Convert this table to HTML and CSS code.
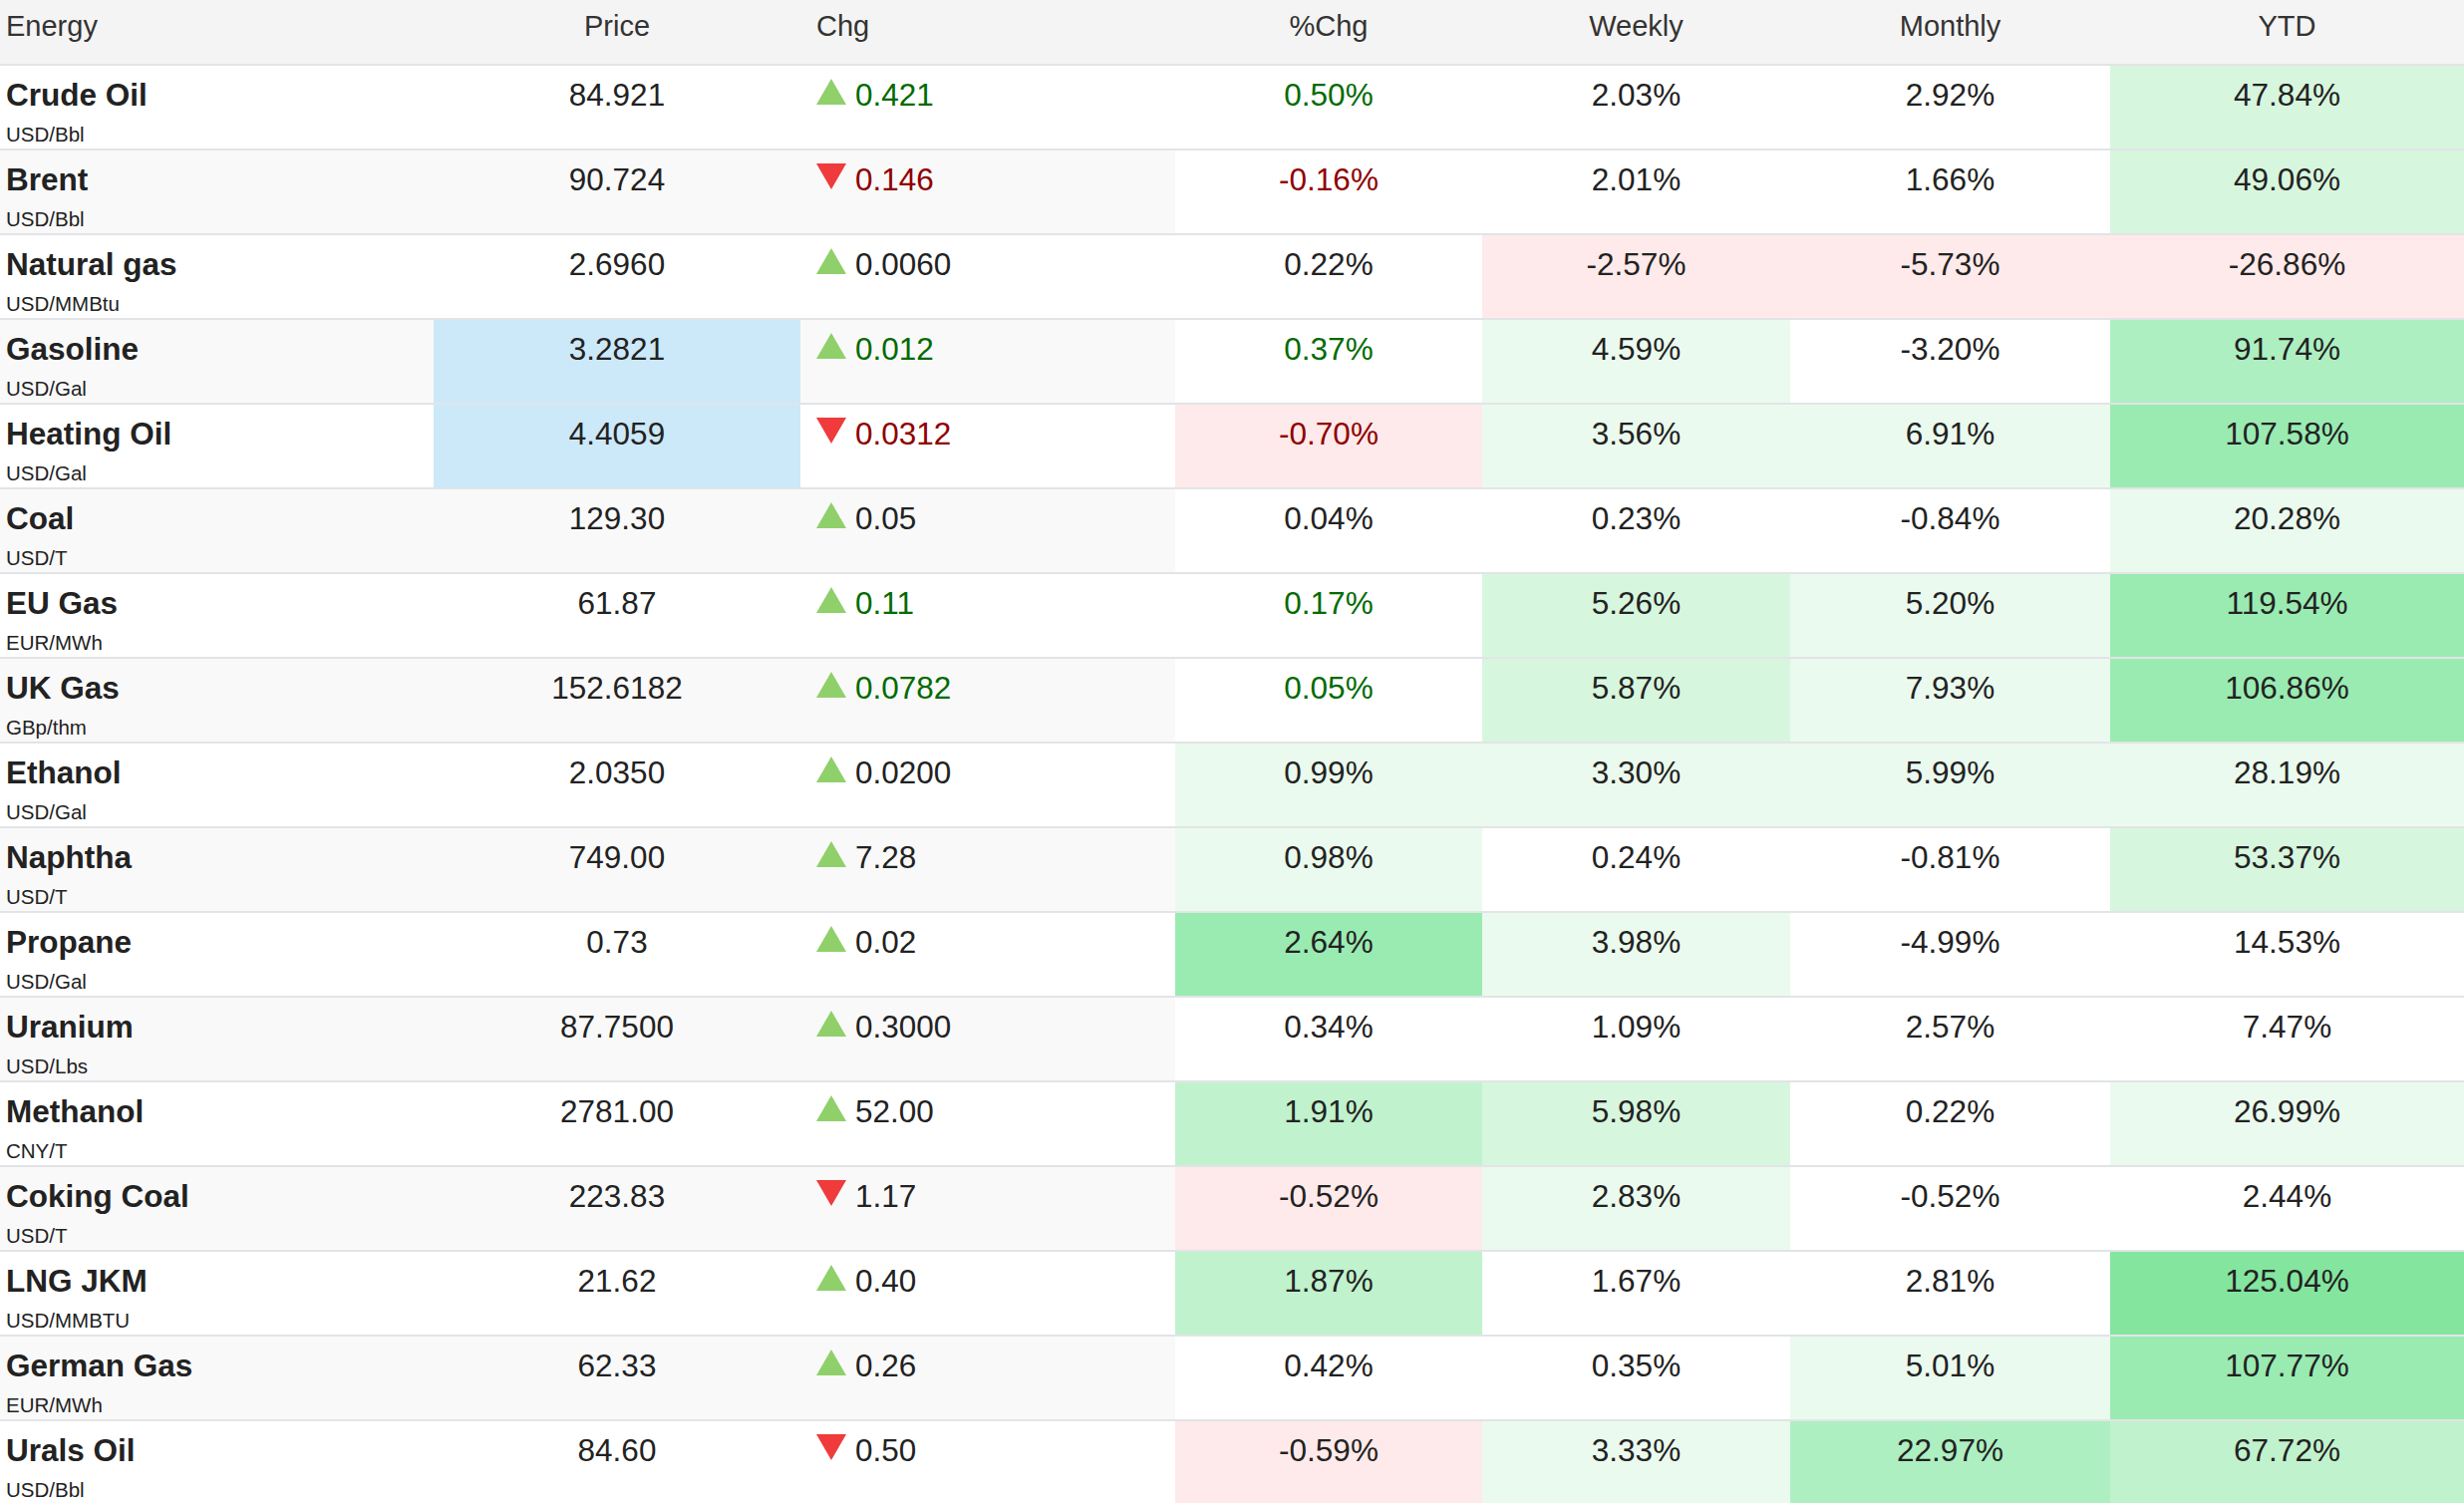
FILE: index.html
```html
<!DOCTYPE html>
<html lang="en">
<head>
<meta charset="utf-8">
<title>Energy</title>
<link rel="stylesheet" href="styles.css">
</head>
<body>
<div class="table">
  <div class="row head">
    <div class="cell name">Energy</div>
    <div class="cell num">Price</div>
    <div class="cell chg">Chg</div>
    <div class="cell num">%Chg</div>
    <div class="cell num">Weekly</div>
    <div class="cell num">Monthly</div>
    <div class="cell num">YTD</div>
  </div>

  <div class="row">
    <div class="cell name"><div class="title">Crude Oil</div><div class="unit">USD/Bbl</div></div>
    <div class="cell num">84.921</div>
    <div class="cell chg up"><span class="tri up"></span><span class="pos">0.421</span></div>
    <div class="cell num heat pos">0.50%</div>
    <div class="cell num heat">2.03%</div>
    <div class="cell num heat">2.92%</div>
    <div class="cell num heat g2">47.84%</div>
  </div>

  <div class="row even">
    <div class="cell name"><div class="title">Brent</div><div class="unit">USD/Bbl</div></div>
    <div class="cell num">90.724</div>
    <div class="cell chg"><span class="tri down"></span><span class="neg">0.146</span></div>
    <div class="cell num heat neg">-0.16%</div>
    <div class="cell num heat">2.01%</div>
    <div class="cell num heat">1.66%</div>
    <div class="cell num heat g2">49.06%</div>
  </div>

  <div class="row">
    <div class="cell name"><div class="title">Natural gas</div><div class="unit">USD/MMBtu</div></div>
    <div class="cell num">2.6960</div>
    <div class="cell chg"><span class="tri up"></span><span>0.0060</span></div>
    <div class="cell num heat">0.22%</div>
    <div class="cell num heat r1">-2.57%</div>
    <div class="cell num heat r1">-5.73%</div>
    <div class="cell num heat r1">-26.86%</div>
  </div>

  <div class="row even">
    <div class="cell name"><div class="title">Gasoline</div><div class="unit">USD/Gal</div></div>
    <div class="cell num flash">3.2821</div>
    <div class="cell chg"><span class="tri up"></span><span class="pos">0.012</span></div>
    <div class="cell num heat pos">0.37%</div>
    <div class="cell num heat g1">4.59%</div>
    <div class="cell num heat">-3.20%</div>
    <div class="cell num heat g4">91.74%</div>
  </div>

  <div class="row">
    <div class="cell name"><div class="title">Heating Oil</div><div class="unit">USD/Gal</div></div>
    <div class="cell num flash">4.4059</div>
    <div class="cell chg"><span class="tri down"></span><span class="neg">0.0312</span></div>
    <div class="cell num heat r1 neg">-0.70%</div>
    <div class="cell num heat g1">3.56%</div>
    <div class="cell num heat g1">6.91%</div>
    <div class="cell num heat g5">107.58%</div>
  </div>

  <div class="row even">
    <div class="cell name"><div class="title">Coal</div><div class="unit">USD/T</div></div>
    <div class="cell num">129.30</div>
    <div class="cell chg"><span class="tri up"></span><span>0.05</span></div>
    <div class="cell num heat">0.04%</div>
    <div class="cell num heat">0.23%</div>
    <div class="cell num heat">-0.84%</div>
    <div class="cell num heat g1">20.28%</div>
  </div>

  <div class="row">
    <div class="cell name"><div class="title">EU Gas</div><div class="unit">EUR/MWh</div></div>
    <div class="cell num">61.87</div>
    <div class="cell chg"><span class="tri up"></span><span class="pos">0.11</span></div>
    <div class="cell num heat pos">0.17%</div>
    <div class="cell num heat g2">5.26%</div>
    <div class="cell num heat g1">5.20%</div>
    <div class="cell num heat g5">119.54%</div>
  </div>

  <div class="row even">
    <div class="cell name"><div class="title">UK Gas</div><div class="unit">GBp/thm</div></div>
    <div class="cell num">152.6182</div>
    <div class="cell chg"><span class="tri up"></span><span class="pos">0.0782</span></div>
    <div class="cell num heat pos">0.05%</div>
    <div class="cell num heat g2">5.87%</div>
    <div class="cell num heat g1">7.93%</div>
    <div class="cell num heat g5">106.86%</div>
  </div>

  <div class="row">
    <div class="cell name"><div class="title">Ethanol</div><div class="unit">USD/Gal</div></div>
    <div class="cell num">2.0350</div>
    <div class="cell chg"><span class="tri up"></span><span>0.0200</span></div>
    <div class="cell num heat g1">0.99%</div>
    <div class="cell num heat g1">3.30%</div>
    <div class="cell num heat g1">5.99%</div>
    <div class="cell num heat g1">28.19%</div>
  </div>

  <div class="row even">
    <div class="cell name"><div class="title">Naphtha</div><div class="unit">USD/T</div></div>
    <div class="cell num">749.00</div>
    <div class="cell chg"><span class="tri up"></span><span>7.28</span></div>
    <div class="cell num heat g1">0.98%</div>
    <div class="cell num heat">0.24%</div>
    <div class="cell num heat">-0.81%</div>
    <div class="cell num heat g2">53.37%</div>
  </div>

  <div class="row">
    <div class="cell name"><div class="title">Propane</div><div class="unit">USD/Gal</div></div>
    <div class="cell num">0.73</div>
    <div class="cell chg"><span class="tri up"></span><span>0.02</span></div>
    <div class="cell num heat g5">2.64%</div>
    <div class="cell num heat g1">3.98%</div>
    <div class="cell num heat">-4.99%</div>
    <div class="cell num heat">14.53%</div>
  </div>

  <div class="row even">
    <div class="cell name"><div class="title">Uranium</div><div class="unit">USD/Lbs</div></div>
    <div class="cell num">87.7500</div>
    <div class="cell chg"><span class="tri up"></span><span>0.3000</span></div>
    <div class="cell num heat">0.34%</div>
    <div class="cell num heat">1.09%</div>
    <div class="cell num heat">2.57%</div>
    <div class="cell num heat">7.47%</div>
  </div>

  <div class="row">
    <div class="cell name"><div class="title">Methanol</div><div class="unit">CNY/T</div></div>
    <div class="cell num">2781.00</div>
    <div class="cell chg"><span class="tri up"></span><span>52.00</span></div>
    <div class="cell num heat g3">1.91%</div>
    <div class="cell num heat g2">5.98%</div>
    <div class="cell num heat">0.22%</div>
    <div class="cell num heat g1">26.99%</div>
  </div>

  <div class="row even">
    <div class="cell name"><div class="title">Coking Coal</div><div class="unit">USD/T</div></div>
    <div class="cell num">223.83</div>
    <div class="cell chg"><span class="tri down"></span><span>1.17</span></div>
    <div class="cell num heat r1">-0.52%</div>
    <div class="cell num heat g1">2.83%</div>
    <div class="cell num heat">-0.52%</div>
    <div class="cell num heat">2.44%</div>
  </div>

  <div class="row">
    <div class="cell name"><div class="title">LNG JKM</div><div class="unit">USD/MMBTU</div></div>
    <div class="cell num">21.62</div>
    <div class="cell chg"><span class="tri up"></span><span>0.40</span></div>
    <div class="cell num heat g3">1.87%</div>
    <div class="cell num heat">1.67%</div>
    <div class="cell num heat">2.81%</div>
    <div class="cell num heat g6">125.04%</div>
  </div>

  <div class="row even">
    <div class="cell name"><div class="title">German Gas</div><div class="unit">EUR/MWh</div></div>
    <div class="cell num">62.33</div>
    <div class="cell chg"><span class="tri up"></span><span>0.26</span></div>
    <div class="cell num heat">0.42%</div>
    <div class="cell num heat">0.35%</div>
    <div class="cell num heat g1">5.01%</div>
    <div class="cell num heat g5">107.77%</div>
  </div>

  <div class="row">
    <div class="cell name"><div class="title">Urals Oil</div><div class="unit">USD/Bbl</div></div>
    <div class="cell num">84.60</div>
    <div class="cell chg"><span class="tri down"></span><span>0.50</span></div>
    <div class="cell num heat r1">-0.59%</div>
    <div class="cell num heat g1">3.33%</div>
    <div class="cell num heat g4">22.97%</div>
    <div class="cell num heat g3">67.72%</div>
  </div>
</div>
</body>
</html>
```

FILE: styles.css
```css
html, body {
  margin: 0;
  padding: 0;
  background: #ffffff;
}

body {
  font-family: "Liberation Sans", Arial, Helvetica, sans-serif;
  color: #222222;
}

.table {
  width: 2472px;
}

.row {
  display: grid;
  grid-template-columns: 435px 368px 376px 308px 309px 321px 355px;
  height: 85px;
  box-sizing: border-box;
  border-bottom: 2px solid #e2e4e7;
}

.row.head {
  height: 66px;
  background: #f4f4f4;
}

.cell {
  box-sizing: border-box;
  padding-top: 11px;
  font-size: 31.5px;
  line-height: 36px;
  white-space: nowrap;
}

.head .cell {
  padding-top: 10px;
  font-size: 29px;
  line-height: 33px;
  color: #333333;
}

.cell.name {
  padding-left: 6px;
}

.cell.num {
  text-align: center;
}

.cell.chg {
  padding-left: 16px;
}

.row.even .cell {
  background: #f9f9f9;
}

.row .cell.heat {
  background: #ffffff;
}

.title {
  font-weight: bold;
  color: #222222;
}

.unit {
  margin-top: 10px;
  font-size: 20.5px;
  line-height: 23px;
  color: #222222;
}

.tri {
  display: inline-block;
  width: 0;
  height: 0;
  margin-right: 9px;
  vertical-align: baseline;
  position: relative;
  top: -1px;
}

.tri.up {
  border-left: 15px solid transparent;
  border-right: 15px solid transparent;
  border-bottom: 26px solid #8fd06a;
}

.tri.down {
  border-left: 15px solid transparent;
  border-right: 15px solid transparent;
  border-top: 26px solid #ef3b3b;
}

.pos {
  color: #036b03;
}

.neg {
  color: #8f0000;
}

.row .cell.flash {
  background: #cce9f9;
}

.row .cell.g1 { background: #ebfaee; }
.row .cell.g2 { background: #d7f6de; }
.row .cell.g3 { background: #c0f2cd; }
.row .cell.g4 { background: #adefc1; }
.row .cell.g5 { background: #9aebb2; }
.row .cell.g6 { background: #84e59f; }
.row .cell.r1 { background: #feeaea; }
```
